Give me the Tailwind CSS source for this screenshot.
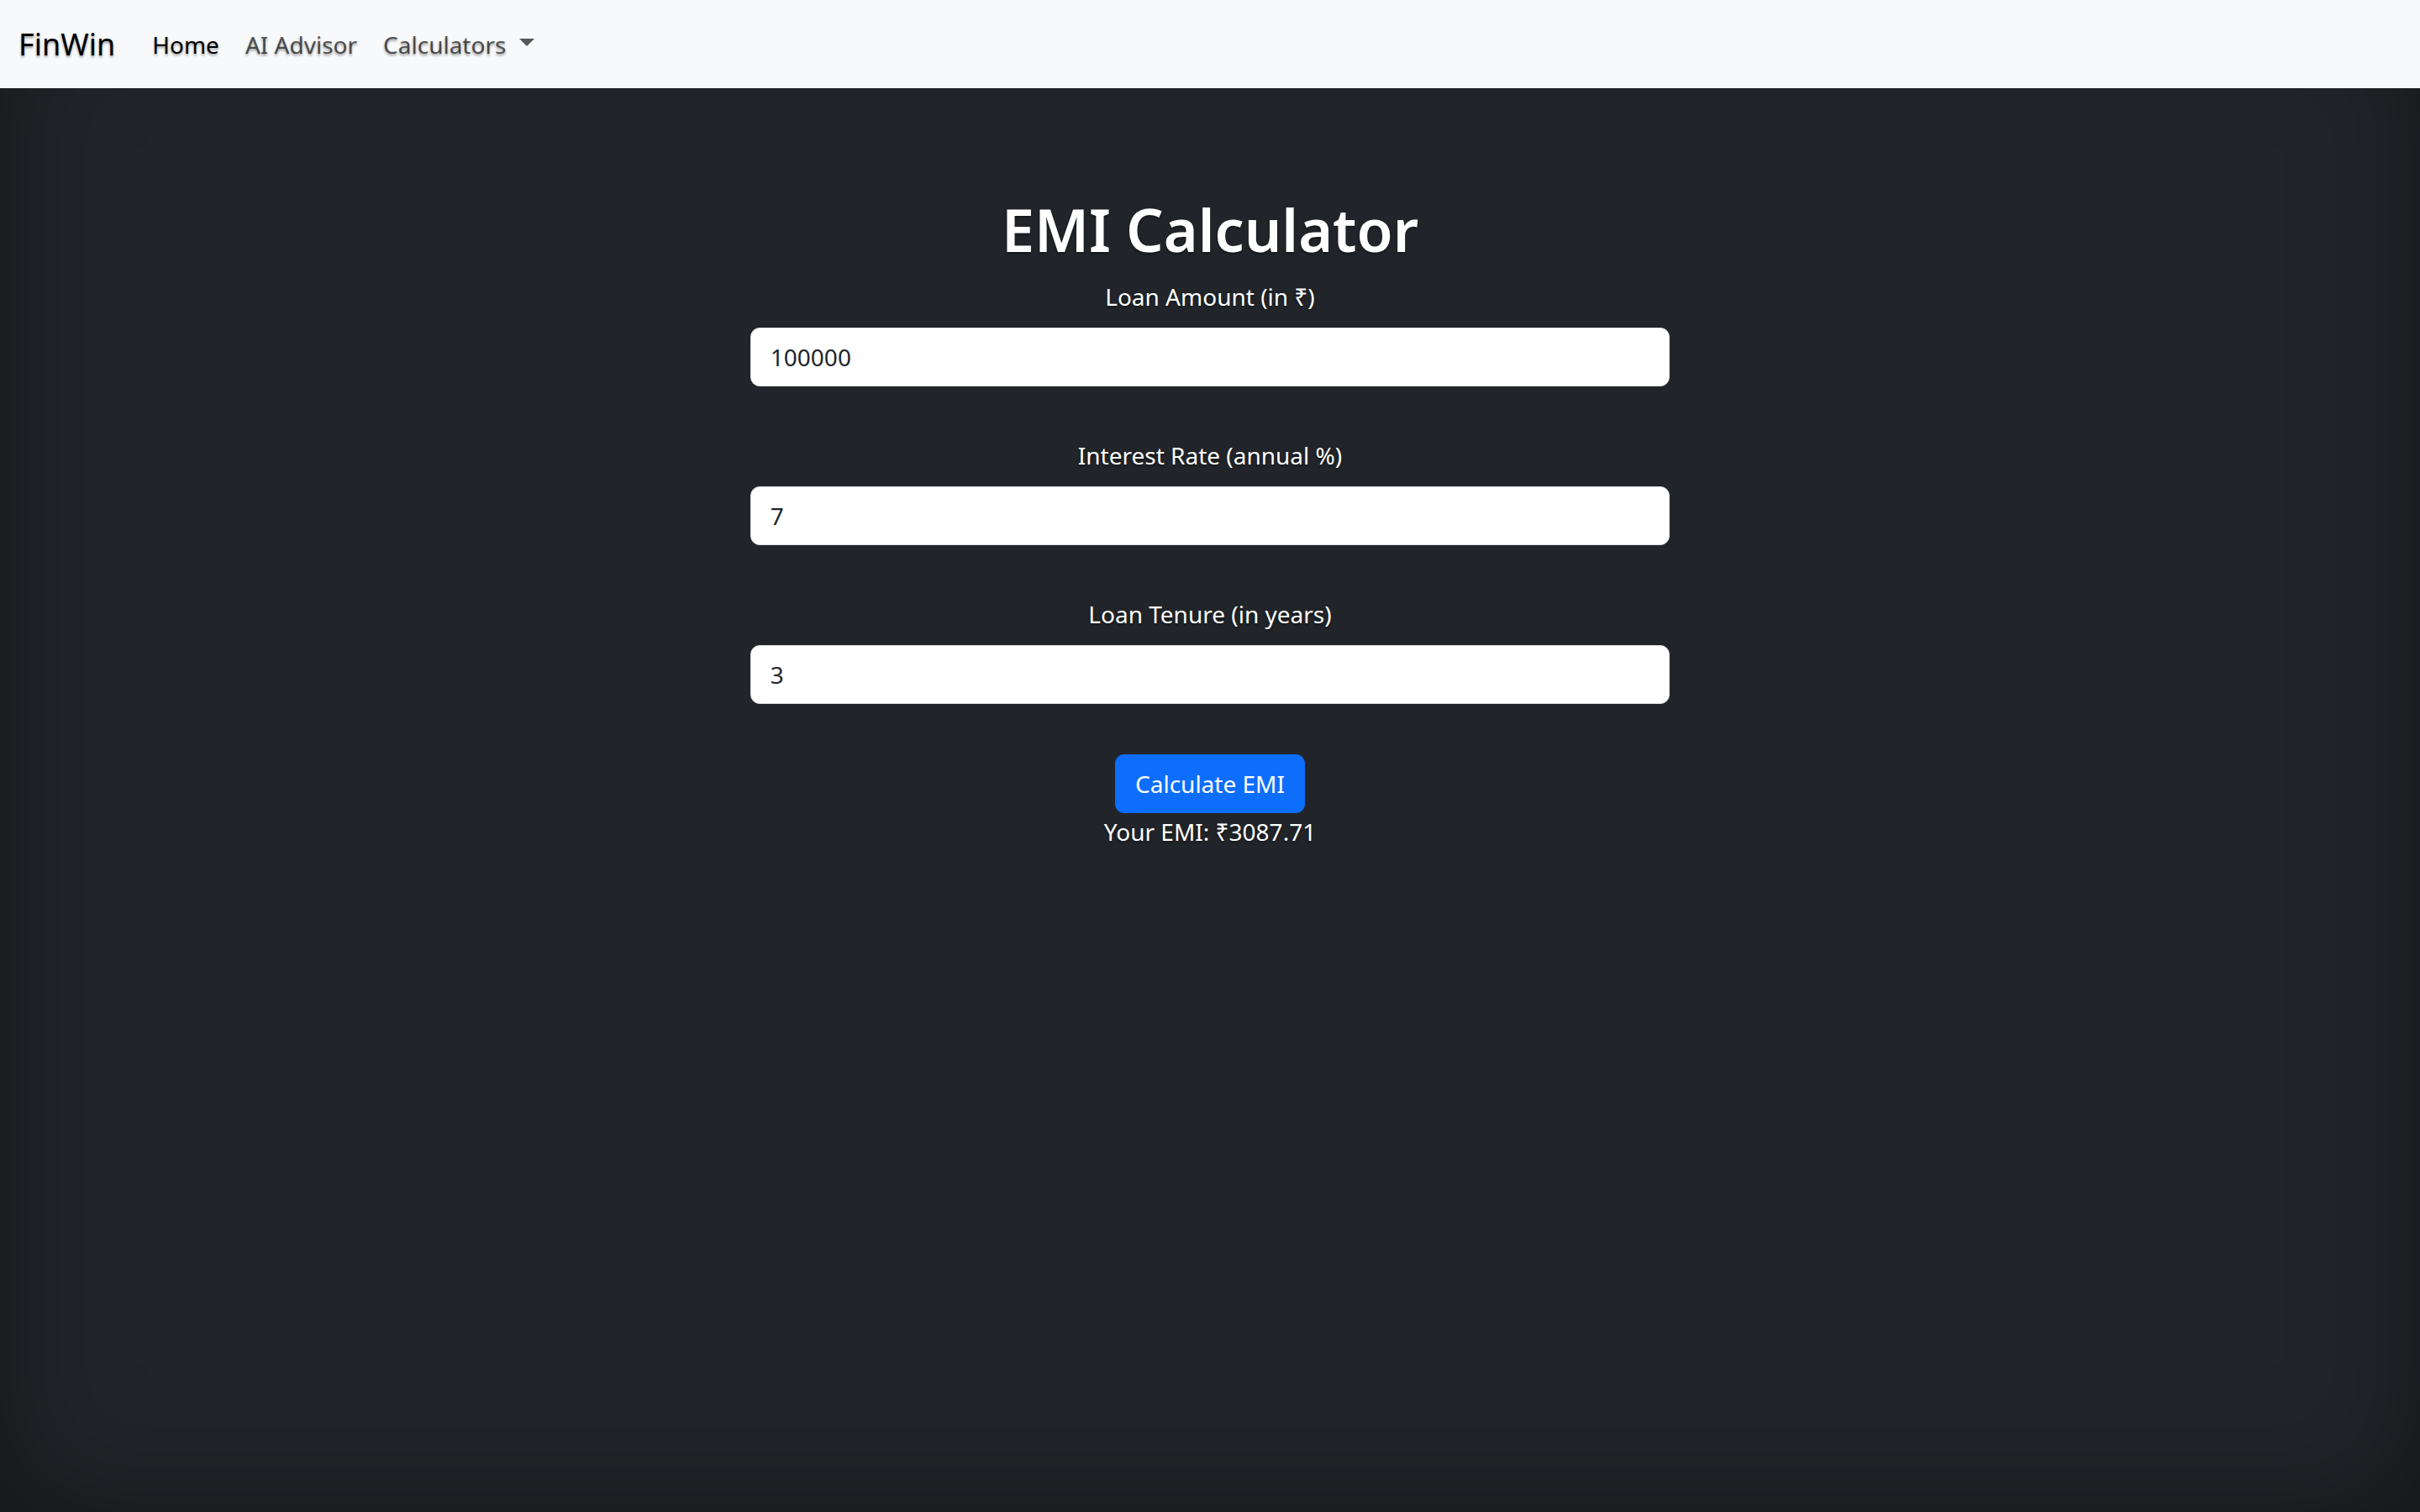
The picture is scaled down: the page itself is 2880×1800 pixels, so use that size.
<!DOCTYPE html>
<html lang="en">
<head>
<meta charset="utf-8">
<title>FinWin - EMI Calculator</title>
<script src="https://cdn.jsdelivr.net/npm/@tailwindcss/browser@4"></script>
</head>
<body class="min-h-screen flex flex-col bg-[#212529] shadow-[inset_0_0_147px_rgba(0,0,0,0.4)] font-['Noto_Sans','Open_Sans',sans-serif] text-[28px] leading-[44px] text-white [text-shadow:0_2px_3px_rgba(0,0,0,0.4)]">
  <nav class="flex items-center h-[105px] px-[22px] bg-[#f8f9fa] text-black/65">
    <a href="#" class="mr-[44px] text-[36px] text-black">FinWin</a>
    <ul class="flex items-center gap-[31px]">
      <li><a href="#" class="text-black">Home</a></li>
      <li><a href="#">AI Advisor</a></li>
      <li>
        <button type="button" class="flex items-center gap-4 [text-shadow:inherit]">Calculators
          <svg class="w-[18px] h-[9px] mb-1" viewBox="0 0 18 9" fill="currentColor" aria-hidden="true"><path d="M0 0h18L9 9z"/></svg>
        </button>
      </li>
    </ul>
  </nav>
  <main class="w-[38%] mx-auto pt-[124px] flex flex-col items-center text-center">
    <h1 class="mb-[14px] text-[70px] leading-[88px] font-semibold">EMI Calculator</h1>
    <form class="w-full flex flex-col items-center gap-[60px]">
      <div class="w-full flex flex-col gap-[15px]">
        <label for="amount">Loan Amount (in ₹)</label>
        <input id="amount" type="text" inputmode="numeric" value="100000" class="w-full h-[70px] px-[23px] rounded-[11px] border border-[#dee2e6] bg-white text-[#212529]">
      </div>
      <div class="w-full flex flex-col gap-[15px]">
        <label for="rate">Interest Rate (annual %)</label>
        <input id="rate" type="text" inputmode="numeric" value="7" class="w-full h-[70px] px-[23px] rounded-[11px] border border-[#dee2e6] bg-white text-[#212529]">
      </div>
      <div class="w-full flex flex-col gap-[15px]">
        <label for="tenure">Loan Tenure (in years)</label>
        <input id="tenure" type="text" inputmode="numeric" value="3" class="w-full h-[70px] px-[23px] rounded-[11px] border border-[#dee2e6] bg-white text-[#212529]">
      </div>
      <button type="button" class="h-[70px] px-6 rounded-[11px] bg-[#0d6efd] text-white">Calculate EMI</button>
    </form>
    <p>Your EMI: ₹3087.71</p>
  </main>
</body>
</html>
